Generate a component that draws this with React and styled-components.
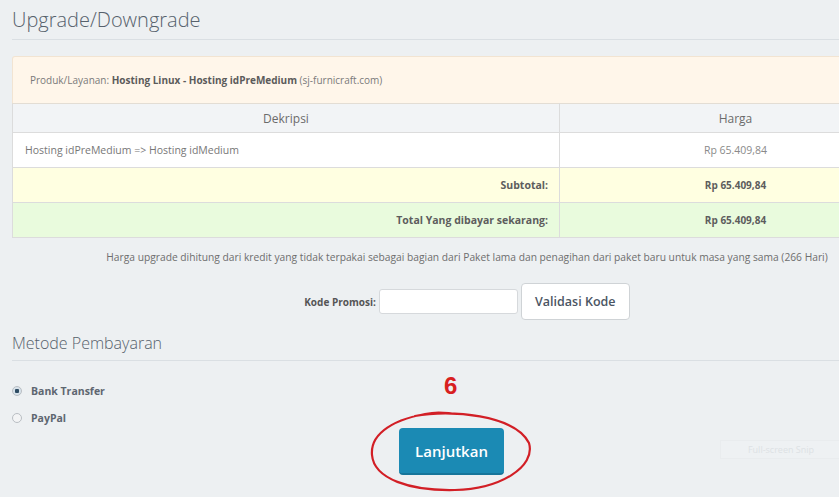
import React from 'react'
import styled, { createGlobalStyle } from 'styled-components';

const GlobalStyle = createGlobalStyle`
  html, body {
    margin: 0;
    padding: 0;
    background: #edf0f2;
    overflow: hidden;
  }
  body {
    font-family: 'Open Sans', 'Noto Sans', sans-serif;
    color: #666;
  }
`;

const rows = [
  { label: 'Hosting idPreMedium => Hosting idMedium', price: 'Rp 65.409,84', kind: 'item' },
  { label: 'Subtotal:', price: 'Rp 65.409,84', kind: 'subtotal' },
  { label: 'Total Yang dibayar sekarang:', price: 'Rp 65.409,84', kind: 'total' },
];

function App() {
  return (
    <>
      <GlobalStyle />
      <Page>
        <Heading>Upgrade/Downgrade</Heading>

        <Alert>
          Produk/Layanan:&nbsp;<strong>Hosting Linux - Hosting idPreMedium</strong>&nbsp;(sj-furnicraft.com)
        </Alert>

        <Table>
          <thead>
            <tr>
              <HeadCell>Dekripsi</HeadCell>
              <HeadCell>Harga</HeadCell>
            </tr>
          </thead>
          <tbody>
            {rows.map((r) => (
              <Row key={r.label} kind={r.kind}>
                <LabelCell kind={r.kind}>{r.label}</LabelCell>
                <PriceCell kind={r.kind}>{r.price}</PriceCell>
              </Row>
            ))}
          </tbody>
        </Table>

        <Note>
          Harga upgrade dihitung dari kredit yang tidak terpakai sebagai bagian dari Paket lama dan penagihan dari paket baru untuk masa yang sama (266 Hari)
        </Note>

        <Promo>
          <PromoLabel>Kode Promosi:</PromoLabel>
          <PromoInput type="text" />
          <GhostButton>Validasi Kode</GhostButton>
        </Promo>

        <SubHeading>Metode Pembayaran</SubHeading>

        <Methods>
          <Method>
            <Radio checked />
            Bank Transfer
          </Method>
          <Method>
            <Radio />
            PayPal
          </Method>
        </Methods>

        <Actions>
          <ButtonWrap>
            <StepNumber>6</StepNumber>
            <Ring width="163" height="83" viewBox="0 0 163 83">
              <path
                d="M45 7 C80 0 145 6 159 34 C166 58 130 80 85 81 C40 82 4 70 2 46 C0 24 25 9 62 4 C70 3 76 4 82 4.5"
                fill="none"
                stroke="#d21f26"
                strokeWidth="2.2"
                strokeLinecap="round"
              />
            </Ring>
            <PrimaryButton>Lanjutkan</PrimaryButton>
          </ButtonWrap>
        </Actions>

        <SnipHint>Full-screen Snip</SnipHint>
      </Page>
    </>
  )
}

export default App

const Page = styled.div`
  position: relative;
  width: 900px;
  height: 497px;
  margin-left: 12px;
`;

const Heading = styled.h1`
  margin: 0;
  padding-top: 6px;
  height: 33px;
  font-size: 20px;
  font-weight: 300;
  color: #56616c;
  border-bottom: 1px solid #dadfe3;
`;

const Alert = styled.div`
  margin-top: 16px;
  height: 47px;
  display: flex;
  align-items: center;
  padding: 0 17px;
  box-sizing: border-box;
  background: #fff6ea;
  border: 1px solid #f2e4d2;
  border-bottom: none;
  border-radius: 3px 3px 0 0;
  font-size: 10px;
  color: #7a7a7a;

  strong {
    color: #5b5b5b;
    font-weight: 700;
  }
`;

const Table = styled.table`
  width: 900px;
  border-collapse: collapse;
  font-size: 10.5px;
  border: 1px solid #dcdcdc;
  border-top: 1px solid #e3ddd4;
`;

const HeadCell = styled.th`
  height: 28px;
  padding: 0;
  background: #f2f4f6;
  font-weight: 400;
  font-size: 12px;
  color: #6b6b6b;
  text-align: center;
  border-right: 1px solid #dcdcdc;

  &:first-child {
    width: 546px;
  }
`;

const rowBg = {
  item: '#ffffff',
  subtotal: '#ffffe1',
  total: '#e9fbdd',
};

const Row = styled.tr`
  background: ${(p) => rowBg[p.kind]};
  height: 35px;
  border-top: 1px solid #dcdcdc;
`;

const LabelCell = styled.td`
  padding: 0 ${(p) => (p.kind === 'item' ? '0 0 12px' : '11px 0 0')};
  text-align: ${(p) => (p.kind === 'item' ? 'left' : 'right')};
  font-weight: ${(p) => (p.kind === 'item' ? 400 : 700)};
  color: ${(p) => (p.kind === 'item' ? '#777' : '#5d5d5d')};
  border-right: 1px solid #dcdcdc;
`;

const PriceCell = styled.td`
  text-align: center;
  font-weight: ${(p) => (p.kind === 'item' ? 400 : 700)};
  color: ${(p) => (p.kind === 'item' ? '#8a8a8a' : '#5d5d5d')};
  font-size: ${(p) => (p.kind === 'item' ? '10.5px' : '10px')};
`;

const Note = styled.p`
  margin: 12px 0 0;
  text-align: center;
  font-size: 10.25px;
  color: #6e6e6e;
  padding-left: 10px;
`;

const Promo = styled.div`
  margin-top: 19px;
  display: flex;
  align-items: center;
  justify-content: center;
  gap: 3px;
  padding-left: 10px;
`;

const PromoLabel = styled.span`
  font-size: 10px;
  font-weight: 700;
  color: #555;
`;

const PromoInput = styled.input`
  width: 139px;
  height: 25px;
  box-sizing: border-box;
  border: 1px solid #d6d9dc;
  border-radius: 3px;
  background: #fff;
  outline: none;
`;

const GhostButton = styled.button`
  width: 109px;
  height: 37px;
  background: #fff;
  border: 1px solid #cfd3d6;
  border-radius: 4px;
  font-family: inherit;
  font-size: 12.5px;
  font-weight: 600;
  color: #4b5563;
  cursor: pointer;
`;

const SubHeading = styled.h2`
  margin: 10px 0 0;
  height: 28px;
  padding-top: 2px;
  font-size: 16px;
  font-weight: 300;
  color: #56616c;
  border-bottom: 1px solid #dadfe3;
`;

const Methods = styled.div`
  margin-top: 23px;
  display: flex;
  flex-direction: column;
  gap: 13px;
`;

const Method = styled.label`
  display: flex;
  align-items: center;
  gap: 9px;
  font-size: 10.5px;
  font-weight: 700;
  color: #5e6670;
  height: 14px;
`;

const Radio = styled.span`
  width: 8px;
  height: 8px;
  border-radius: 50%;
  border: 1px solid #b9bec3;
  background: ${(p) => (p.checked ? 'radial-gradient(circle, #2e4c63 0 2px, #d8e2ea 2.5px)' : '#f3f4f5')};
`;

const Actions = styled.div`
  margin-top: 3px;
  display: flex;
  justify-content: center;
  padding-right: 21px;
`;

const ButtonWrap = styled.div`
  position: relative;
`;

const PrimaryButton = styled.button`
  position: relative;
  width: 105px;
  height: 47px;
  background: #1b8ab4;
  border: none;
  border-bottom: 2px solid #16759a;
  border-radius: 4px;
  font-family: inherit;
  font-size: 15px;
  font-weight: 600;
  color: #fff;
  cursor: pointer;
`;

const StepNumber = styled.span`
  position: absolute;
  left: 45px;
  top: -56px;
  font-family: 'Liberation Sans', Arial, sans-serif;
  font-weight: 700;
  font-size: 24px;
  color: #d8201f;
`;

const Ring = styled.svg`
  position: absolute;
  left: -29px;
  top: -19px;
  pointer-events: none;
`;

const SnipHint = styled.div`
  position: absolute;
  left: 708px;
  top: 440px;
  width: 120px;
  height: 17px;
  display: flex;
  align-items: center;
  justify-content: center;
  font-size: 9px;
  color: #dde1e4;
  background: #eef1f3;
  border: 1px solid #e9ecee;
`;
